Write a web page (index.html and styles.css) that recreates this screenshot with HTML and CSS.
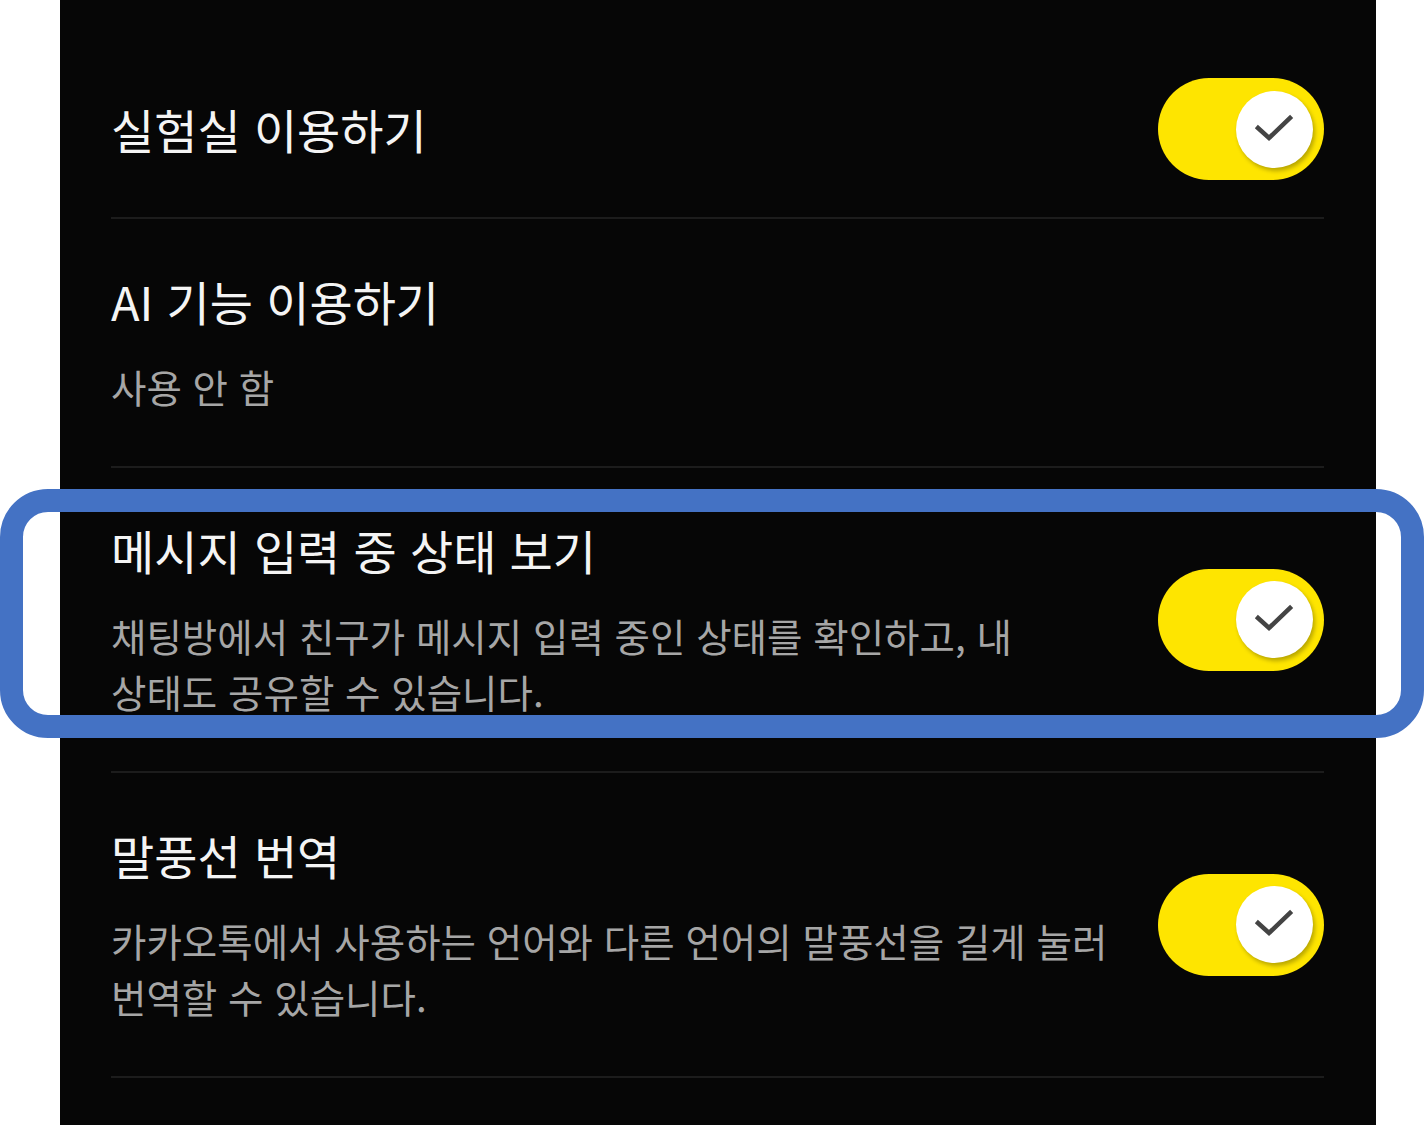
FILE: index.html
```html
<!DOCTYPE html>
<html lang="ko">
<head>
	<meta charset="UTF-8">
	<title>설정</title>
	<link rel="stylesheet" href="styles.css">
</head>
<body>
	<div id="panel">
		<div class="row solo">
			<div class="text">
				<p class="title">실험실 이용하기</p>
			</div>
			<div class="switch on"><span class="knob"><svg viewBox="0 0 77 77" width="77" height="77"><polyline points="22,37 33,47 54,27" /></svg></span></div>
		</div>
		<div class="row">
			<div class="text">
				<p class="title">AI 기능 이용하기</p>
				<p class="desc">사용 안 함</p>
			</div>
		</div>
		<div class="row">
			<div class="text">
				<p class="title">메시지 입력 중 상태 보기</p>
				<p class="desc">채팅방에서 친구가 메시지 입력 중인 상태를 확인하고, 내<br>상태도 공유할 수 있습니다.</p>
			</div>
			<div class="switch on"><span class="knob"><svg viewBox="0 0 77 77" width="77" height="77"><polyline points="22,37 33,47 54,27" /></svg></span></div>
		</div>
		<div class="row">
			<div class="text">
				<p class="title">말풍선 번역</p>
				<p class="desc">카카오톡에서 사용하는 언어와 다른 언어의 말풍선을 길게 눌러<br>번역할 수 있습니다.</p>
			</div>
			<div class="switch on"><span class="knob"><svg viewBox="0 0 77 77" width="77" height="77"><polyline points="22,37 33,47 54,27" /></svg></span></div>
		</div>
	</div>
	<!-- 강조 표시 -->
	<div class="mark"></div>
</body>
</html>
```

FILE: styles.css
```css
*{
	margin: 0;
	padding: 0;
	box-sizing: border-box;
}
body{
	background: #fff;
	overflow: hidden;
	font-family: "Noto Sans CJK KR", "Noto Sans", sans-serif;
}
#panel{
	width: 1316px;
	min-height: 100vh;
	margin-left: 60px;
	padding: 0 52px 0 51px;
	background: #060606;
}
.row{
	display: flex;
	align-items: center;
	gap: 40px;
	padding: 52px 0;
	border-bottom: 2px solid #1c1c1c;
}
.row.solo{
	padding: 78px 0 37px;
}
.text{
	flex: 1;
}
.title{
	font-size: 47px;
	line-height: 60px;
	color: #f4f4f4;
}
.desc{
	margin-top: 27px;
	font-size: 38.5px;
	line-height: 56px;
	color: #a6a6a6;
}
.switch{
	flex: none;
	width: 166px;
	height: 102px;
	border-radius: 51px;
	background: #fee500;
	display: flex;
	align-items: center;
	justify-content: flex-end;
	padding-right: 11px;
}
.knob{
	width: 77px;
	height: 77px;
	border-radius: 50%;
	background: #fff;
	box-shadow: 2px 3px 4px rgba(0,0,0,0.28);
}
.knob svg{
	display: block;
	fill: none;
	stroke: #444;
	stroke-width: 4.5;
	stroke-linecap: square;
}
.mark{
	position: absolute;
	left: 0;
	top: 489px;
	width: 1424px;
	height: 249px;
	border: 23px solid #4472c4;
	border-radius: 48px;
}
```
